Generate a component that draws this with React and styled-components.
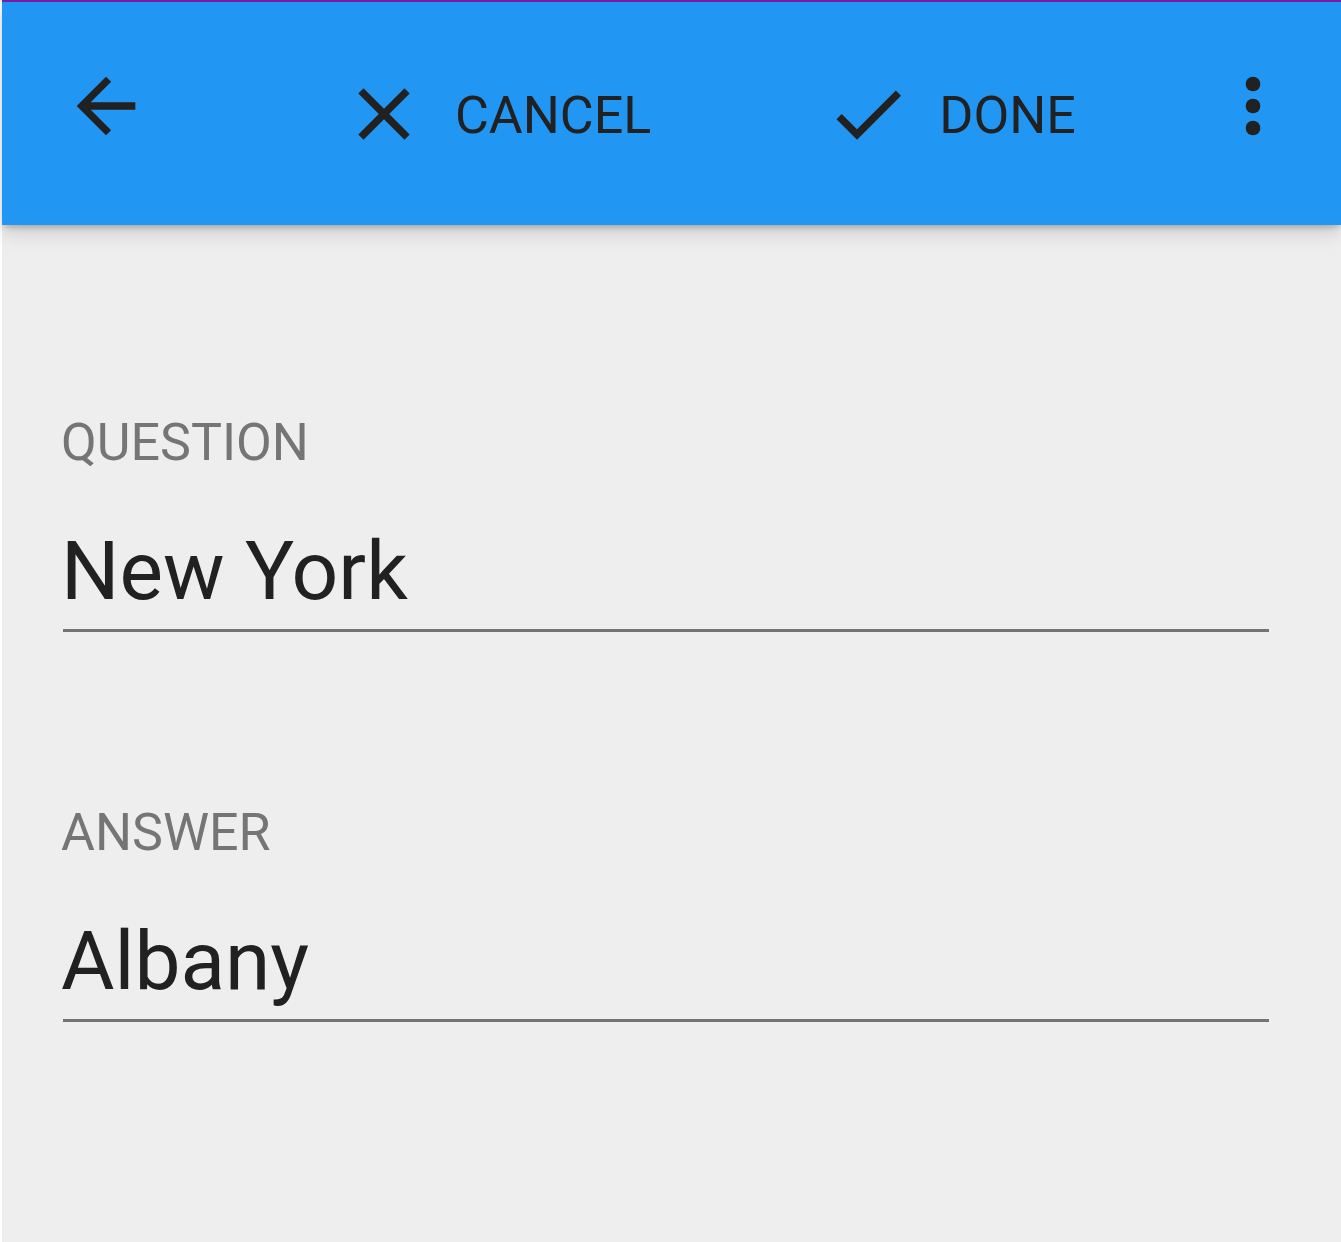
import React from "react";
import styled, { createGlobalStyle } from "styled-components";

const GlobalStyle = createGlobalStyle`
  html, body {
    margin: 0;
    padding: 0;
    background: #ffffff;
  }
  body {
    font-family: Roboto, "Noto Sans", "Liberation Sans", sans-serif;
  }
`;

// Whole screen
const Screen = styled.div`
  display: flex;
  flex-direction: column;
  min-height: 1242px;
  margin-left: 2px;
  background: #eeeeee;
`;

// Thin status strip above the app bar
const StatusStrip = styled.div`
  height: 2px;
  background: #7b1fa2;
`;

// Top app bar
const AppBar = styled.header`
  position: relative;
  z-index: 2;
  display: flex;
  align-items: flex-start;
  height: 223px;
  padding: 60px 44px 0 60px;
  box-sizing: border-box;
  background: #2196f3;
  box-shadow: 0 4px 6px -2px rgba(0, 0, 0, 0.22), 0 8px 18px rgba(0, 0, 0, 0.14);
`;

const IconButton = styled.button`
  display: flex;
  align-items: center;
  justify-content: center;
  width: 88px;
  height: 88px;
  padding: 0;
  border: none;
  background: transparent;
  cursor: pointer;
  margin-left: ${(p) => (p.$push ? "auto" : "0")};
`;

const ActionButton = styled.button`
  display: flex;
  align-items: center;
  gap: 27px;
  height: 88px;
  margin-top: 8px;
  margin-left: ${(p) => p.$offset}px;
  padding: 0;
  border: none;
  background: transparent;
  cursor: pointer;
  color: #212121;
  font-family: Roboto, "Liberation Sans", sans-serif;
  font-size: 52px;
  font-weight: 400;
  letter-spacing: 0;
`;

const ActionLabel = styled.span`
  display: block;
  line-height: 88px;
  padding-top: 3px;
`;

const Icon = styled.svg`
  display: block;
  width: 88px;
  height: 88px;
  fill: #212121;
  flex-shrink: 0;
`;

// Form area
const Form = styled.main`
  display: flex;
  flex-direction: column;
  gap: 174px;
  padding: 191px 72px 0 61px;
`;

const Field = styled.div`
  display: flex;
  flex-direction: column;
  gap: 52px;
`;

const Label = styled.label`
  display: block;
  font-family: Roboto, "Liberation Sans", sans-serif;
  font-size: 52px;
  line-height: 53px;
  color: #757575;
  text-transform: uppercase;
  text-indent: -2px;
`;

const Value = styled.div`
  font-family: Roboto, "Liberation Sans", sans-serif;
  font-size: 82px;
  line-height: 101px;
  color: #212121;
  text-indent: -2px;
  padding-bottom: 7px;
  border-bottom: 3px solid #737373;
`;

const BackIcon = () => (
  <Icon viewBox="0 0 24 24">
    <path d="M20 11H7.83l5.59-5.59L12 4l-8 8 8 8 1.41-1.41L7.83 13H20v-2z" />
  </Icon>
);

const CloseIcon = () => (
  <Icon viewBox="0 0 24 24">
    <path d="M19 6.41L17.59 5 12 10.59 6.41 5 5 6.41 10.59 12 5 17.59 6.41 19 12 13.41 17.59 19 19 17.59 13.41 12z" />
  </Icon>
);

const CheckIcon = () => (
  <Icon viewBox="0 0 24 24">
    <path d="M9 16.17L4.83 12l-1.42 1.41L9 19 21 7l-1.41-1.41z" />
  </Icon>
);

const MoreIcon = () => (
  <Icon viewBox="0 0 24 24">
    <circle cx="12" cy="6" r="2" />
    <circle cx="12" cy="12" r="2" />
    <circle cx="12" cy="18" r="2" />
  </Icon>
);

const fields = [
  { label: "Question", value: "New York" },
  { label: "Answer", value: "Albany" },
];

const App = () => {
  return (
    <>
      <GlobalStyle />
      <Screen>
        <StatusStrip />
        <AppBar>
          <IconButton aria-label="Back">
            <BackIcon />
          </IconButton>
          <ActionButton $offset={190}>
            <CloseIcon />
            <ActionLabel>CANCEL</ActionLabel>
          </ActionButton>
          <ActionButton $offset={173}>
            <CheckIcon />
            <ActionLabel>DONE</ActionLabel>
          </ActionButton>
          <IconButton $push aria-label="More options">
            <MoreIcon />
          </IconButton>
        </AppBar>
        <Form>
          {fields.map((f) => (
            <Field key={f.label}>
              <Label>{f.label}</Label>
              <Value>{f.value}</Value>
            </Field>
          ))}
        </Form>
      </Screen>
    </>
  );
};

export default App;
